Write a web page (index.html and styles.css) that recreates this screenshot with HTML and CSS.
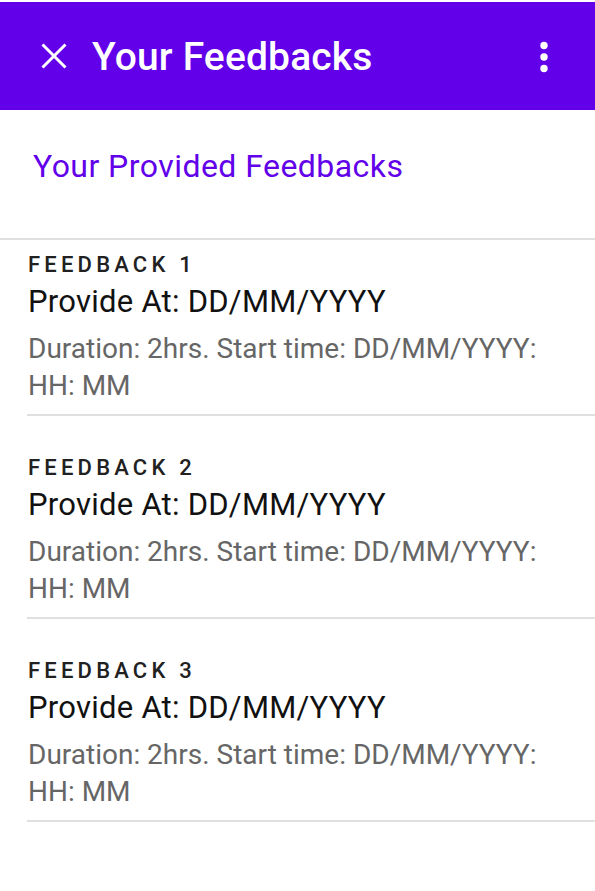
FILE: index.html
```html
<!DOCTYPE html>
<html>
<head>
<meta charset="utf-8">
<link rel="stylesheet" href="styles.css">
</head>
<body>
<header class="appbar">
  <svg class="close" width="26" height="26" viewBox="0 0 26 26"><path d="M1.5 1.5 L24.5 24.5 M24.5 1.5 L1.5 24.5" stroke="#fff" stroke-width="3" fill="none"/></svg>
  <h1 class="title">Your Feedbacks</h1>
  <svg class="more" width="12" height="32" viewBox="0 0 12 32"><circle cx="6" cy="4.5" r="3.7" fill="#fff"/><circle cx="6" cy="16" r="3.7" fill="#fff"/><circle cx="6" cy="27.5" r="3.7" fill="#fff"/></svg>
</header>
<h2 class="subheader">Your Provided Feedbacks</h2>
<ul class="list">
  <li class="item first">
    <div class="overline">FEEDBACK 1</div>
    <div class="primary">Provide At: DD/MM/YYYY</div>
    <div class="secondary">Duration: 2hrs. Start time: DD/MM/YYYY: HH: MM</div>
  </li>
  <li class="item">
    <div class="overline">FEEDBACK 2</div>
    <div class="primary">Provide At: DD/MM/YYYY</div>
    <div class="secondary">Duration: 2hrs. Start time: DD/MM/YYYY: HH: MM</div>
  </li>
  <li class="item">
    <div class="overline">FEEDBACK 3</div>
    <div class="primary">Provide At: DD/MM/YYYY</div>
    <div class="secondary">Duration: 2hrs. Start time: DD/MM/YYYY: HH: MM</div>
  </li>
</ul>
</body>
</html>
```
FILE: styles.css
```css
html, body {
  margin: 0;
  padding: 0;
  background: #fff;
  font-family: Roboto, "Liberation Sans", sans-serif;
}
body {
  padding-top: 2px;
}
.appbar {
  height: 108px;
  background: #6200ea;
  display: flex;
  align-items: center;
  padding: 0 45px 0 41px;
  box-sizing: border-box;
}
.close {
  flex: none;
}
.title {
  flex: 1;
  margin: 2px 0 0 25px;
  color: #fff;
  font-size: 39px;
  font-weight: 500;
  line-height: 44px;
  letter-spacing: 0.15px;
}
.more {
  flex: none;
  margin-top: 2px;
}
.subheader {
  margin: 0;
  padding: 36px 0 0 33px;
  height: 130px;
  box-sizing: border-box;
  color: #6200ea;
  font-size: 32px;
  font-weight: 400;
  line-height: 40px;
  letter-spacing: 0.45px;
  border-bottom: 2px solid #e0e0e0;
}
.list {
  list-style: none;
  margin: 0;
  padding: 0 0 0 27px;
}
.item {
  padding: 39px 20px 10px 0;
  border-bottom: 2px solid #e0e0e0;
}
.item.first {
  padding-top: 12px;
}
.overline {
  margin-left: 1px;
  font-size: 22px;
  font-weight: 500;
  letter-spacing: 4.2px;
  color: #212121;
  line-height: 26px;
}
.primary {
  margin-left: 1px;
  font-size: 31px;
  color: #111;
  line-height: 38px;
  margin-top: 5px;
  letter-spacing: 0.25px;
}
.secondary {
  margin-left: 1px;
  font-size: 28px;
  color: #666;
  line-height: 37px;
  margin-top: 9px;
}
```
